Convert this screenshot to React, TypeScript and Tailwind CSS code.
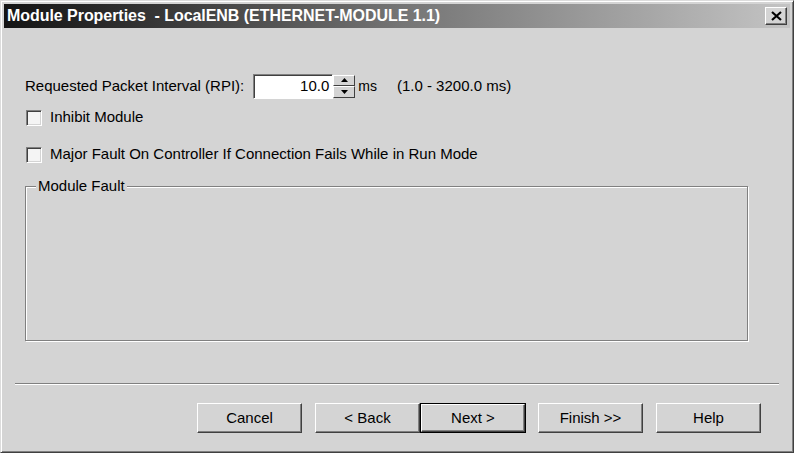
const bodyFont = { fontFamily: '"Liberation Sans", Arial, sans-serif' }

function Checkbox() {
  return (
    <div className="w-[16px] h-[16px] bg-[#f4f4f4] border-t border-l border-[#808080] border-r border-b border-r-white border-b-white shadow-[inset_1px_1px_0_#404040,inset_-1px_-1px_0_#d4d4d4] shrink-0" />
  )
}

function Button({ label, isDefault }: { label: string; isDefault?: boolean }) {
  return (
    <div
      className={
        isDefault
          ? 'w-[106px] h-[30px] border border-black flex'
          : 'w-[105px] h-[30px] flex'
      }
    >
      <div className="flex-1 flex items-center justify-center bg-[#d4d4d4] border-t border-l border-white border-r border-b border-r-[#404040] border-b-[#404040] shadow-[inset_-1px_-1px_0_#808080] text-[15px] text-black">
        {label}
      </div>
    </div>
  )
}

export default function App() {
  return (
    <div
      className="w-[794px] h-[453px] bg-[#d4d4d4] border-t border-l border-[#dcdcdc] border-r border-b border-r-[#404040] border-b-[#404040] shadow-[inset_1px_1px_0_#ffffff,inset_-1px_-1px_0_#808080] p-[3px] flex flex-col overflow-hidden"
      style={bodyFont}
    >
      {/* title bar */}
      <div className="h-[24px] bg-gradient-to-r from-[#141414] via-[#747474] to-[#c4c4c4] flex items-center pl-[3px] pr-[3px]">
        <span className="text-white font-bold text-[16px] leading-none whitespace-pre tracking-[-0.05px]">
          Module Properties  - LocalENB (ETHERNET-MODULE 1.1)
        </span>
        <div className="ml-auto w-[22px] h-[18px] bg-[#d4d4d4] border-t border-l border-white border-r border-b border-r-[#404040] border-b-[#404040] shadow-[inset_-1px_-1px_0_#808080] flex items-center justify-center">
          <svg width="11" height="10" viewBox="0 0 11 10">
            <path d="M1 1 L10 9 M10 1 L1 9" stroke="#000" strokeWidth="2.2" />
          </svg>
        </div>
      </div>

      {/* content */}
      <div className="flex flex-col pl-[21px] pr-[44px] text-[15px] text-black">
        <div className="mt-[46px] h-[24px] flex items-center">
          <span className="mr-[9px]">Requested Packet Interval (RPI):</span>
          <div className="w-[80px] h-[25px] bg-white border-t border-l border-[#808080] border-r border-b border-r-white border-b-white shadow-[inset_1px_1px_0_#404040] flex items-center justify-end pr-[3px]">
            10.0
          </div>
          <div className="w-[22px] h-[23px] flex flex-col">
            <div className="flex-1 bg-[#d4d4d4] border-t border-l border-white border-r border-b border-r-[#404040] border-b-[#404040] flex items-center justify-center">
              <svg width="7" height="4" viewBox="0 0 7 4"><path d="M3.5 0 L7 4 L0 4 Z" fill="#000" /></svg>
            </div>
            <div className="flex-1 bg-[#d4d4d4] border-t border-l border-white border-r border-b border-r-[#404040] border-b-[#404040] flex items-center justify-center">
              <svg width="7" height="4" viewBox="0 0 7 4"><path d="M0 0 L7 0 L3.5 4 Z" fill="#000" /></svg>
            </div>
          </div>
          <span className="ml-[3px] text-[14px]">ms</span>
          <span className="ml-[20px]">(1.0 - 3200.0 ms)</span>
        </div>

        <div className="mt-[12px] h-[15px] flex items-center pl-[1px]">
          <Checkbox />
          <span className="ml-[8px]">Inhibit Module</span>
        </div>

        <div className="mt-[22px] h-[15px] flex items-center pl-[1px]">
          <Checkbox />
          <span className="ml-[8px]">Major Fault On Controller If Connection Fails While in Run Mode</span>
        </div>

        {/* group box */}
        <div className="relative mt-[24px] w-[723px] h-[155px] border border-[#808080] shadow-[inset_1px_1px_0_#ffffff,1px_1px_0_#ffffff]">
          <span className="absolute left-[10px] top-[-10px] bg-[#d4d4d4] px-[2px] leading-[18px]">
            Module Fault
          </span>
        </div>
      </div>

      {/* separator */}
      <div className="mt-[42px] mx-[11px] h-[2px] border-t border-[#808080] border-b border-b-white" />

      {/* buttons */}
      <div className="mt-[18px] flex pl-[193px]">
        <Button label="Cancel" />
        <div className="w-[13px]" />
        <Button label="< Back" />
        <Button label="Next >" isDefault />
        <div className="w-[12px]" />
        <Button label="Finish >>" />
        <div className="w-[13px]" />
        <Button label="Help" />
      </div>
    </div>
  )
}
